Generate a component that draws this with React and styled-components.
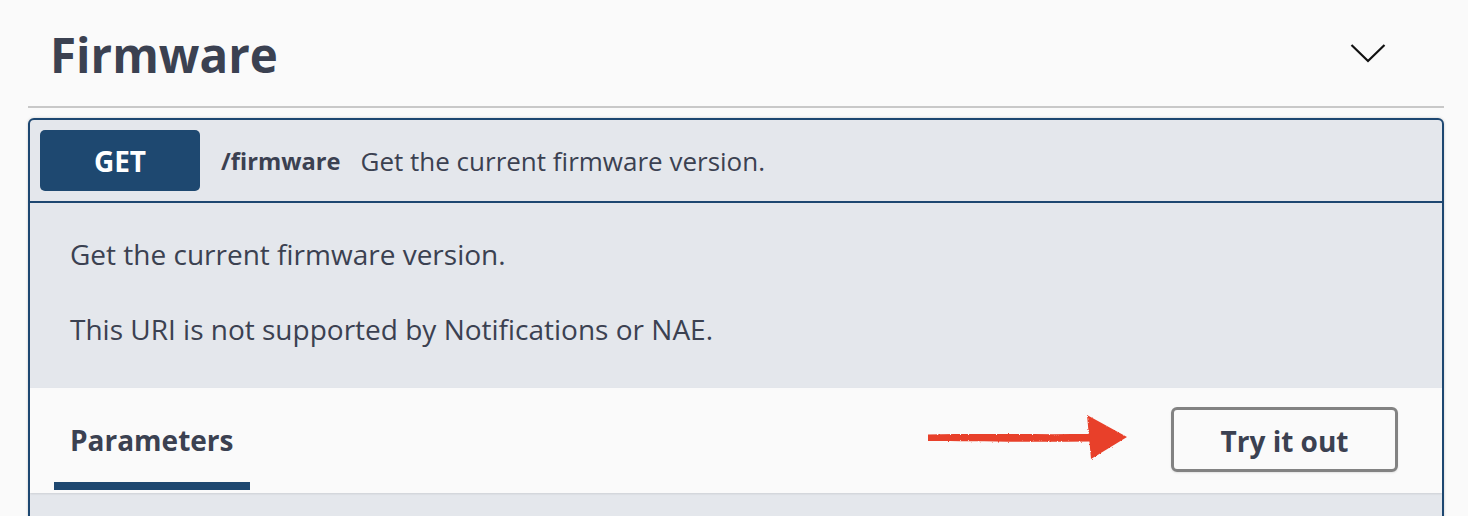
import React from "react";
import styled, { createGlobalStyle } from "styled-components";

const Global = createGlobalStyle`
  html, body { margin: 0; padding: 0; background: #fafafa; }
  body { font-family: "Open Sans", "Noto Sans", sans-serif; color: #3b4151; }
  * { box-sizing: border-box; }
`;

const Page = styled.div`
  width: 1468px;
  height: 516px;
  overflow: hidden;
  padding: 0 24px 0 28px;
`;

const TagHeader = styled.div`
  display: flex;
  align-items: center;
  justify-content: space-between;
  height: 108px;
  padding: 6px 58px 4px 22px;
  border-bottom: 2px solid #c8c8c8;
`;

const TagTitle = styled.h3`
  margin: 0;
  font-size: 47.5px;
  font-weight: 700;
  color: #3b4151;
`;

const Chevron = styled.svg`
  width: 36px;
  height: 20px;
  margin-top: -3px;
`;

const OpBlock = styled.div`
  margin-top: 10px;
  border: 2px solid #1d4771;
  border-radius: 6px;
  background: #e4e7ec;
  height: 420px;
  box-shadow: 0 0 3px rgba(0, 0, 0, 0.19);
  overflow: hidden;
`;

const Summary = styled.div`
  display: flex;
  align-items: center;
  padding: 10px;
  border-bottom: 2px solid #1d4771;
`;

const Method = styled.span`
  display: flex;
  align-items: center;
  justify-content: center;
  width: 160px;
  height: 61px;
  border-radius: 5px;
  background: #1e4870;
  color: #fff;
  font-size: 28px;
  font-weight: 700;
`;

const Path = styled.span`
  margin-left: 21px;
  font-size: 23.7px;
  font-weight: 700;
  color: #3b4151;
`;

const SummaryDesc = styled.span`
  margin-left: 20px;
  font-size: 26px;
  color: #3b4151;
`;

const Description = styled.div`
  padding: 32px 40px 40px;
  font-size: 28px;
  color: #3b4151;
  p {
    margin: 0;
    line-height: 38px;
  }
  p + p {
    margin-top: 37px;
  }
`;

const SectionHeader = styled.div`
  display: flex;
  align-items: center;
  justify-content: space-between;
  height: 105px;
  padding: 0 44px 0 24px;
  background: #fafafa;
  box-shadow: 0 1px 2px rgba(0, 0, 0, 0.1);
`;

const Tab = styled.div`
  align-self: stretch;
  display: flex;
  align-items: center;
  padding: 10px 16px 0;
  font-size: 28px;
  font-weight: 700;
  color: #3b4151;
  width: 196px;
  white-space: nowrap;
  border-bottom: 8px solid #1e4870;
  margin-bottom: 3px;
`;

const Right = styled.div`
  display: flex;
  align-items: center;
  gap: 40px;
`;

const Arrow = styled.svg`
  width: 206px;
  height: 48px;
  margin-top: -7px;
`;

const TryButton = styled.button`
  width: 227px;
  height: 65px;
  padding-top: 3px;
  border: 3px solid #828282;
  border-radius: 6px;
  background: transparent;
  font-family: inherit;
  font-size: 28px;
  font-weight: 700;
  color: #3b4151;
  box-shadow: 0 1px 2px rgba(0, 0, 0, 0.1);
  margin-top: -2px;
`;

export default function App() {
  return (
    <>
      <Global />
      <Page>
        <TagHeader>
          <TagTitle>Firmware</TagTitle>
          <Chevron viewBox="0 0 36 20">
            <path d="M1.5 2 L18 18 L34.5 2" fill="none" stroke="#111" strokeWidth="2.2" />
          </Chevron>
        </TagHeader>
        <OpBlock>
          <Summary>
            <Method>GET</Method>
            <Path>/firmware</Path>
            <SummaryDesc>Get the current firmware version.</SummaryDesc>
          </Summary>
          <Description>
            <p>Get the current firmware version.</p>
            <p>This URI is not supported by Notifications or NAE.</p>
          </Description>
          <SectionHeader>
            <Tab>Parameters</Tab>
            <Right>
              <Arrow viewBox="0 0 206 48">
                <defs>
                  <filter id="rough" x="-5%" y="-20%" width="110%" height="140%">
                    <feTurbulence type="fractalNoise" baseFrequency="0.9" numOctaves="2" seed="3" result="n" />
                    <feDisplacementMap in="SourceGraphic" in2="n" scale="2.5" />
                  </filter>
                </defs>
                <g filter="url(#rough)" fill="#e8402a">
                  <path d="M3 21.5 C50 20.5, 110 21.5, 166 21 L166 28.5 C110 29, 50 28.5, 3 28 Z" />
                  <path d="M162 2 L202 24 L166 46 Z" />
                </g>
              </Arrow>
              <TryButton>Try it out</TryButton>
            </Right>
          </SectionHeader>
        </OpBlock>
      </Page>
    </>
  );
}
